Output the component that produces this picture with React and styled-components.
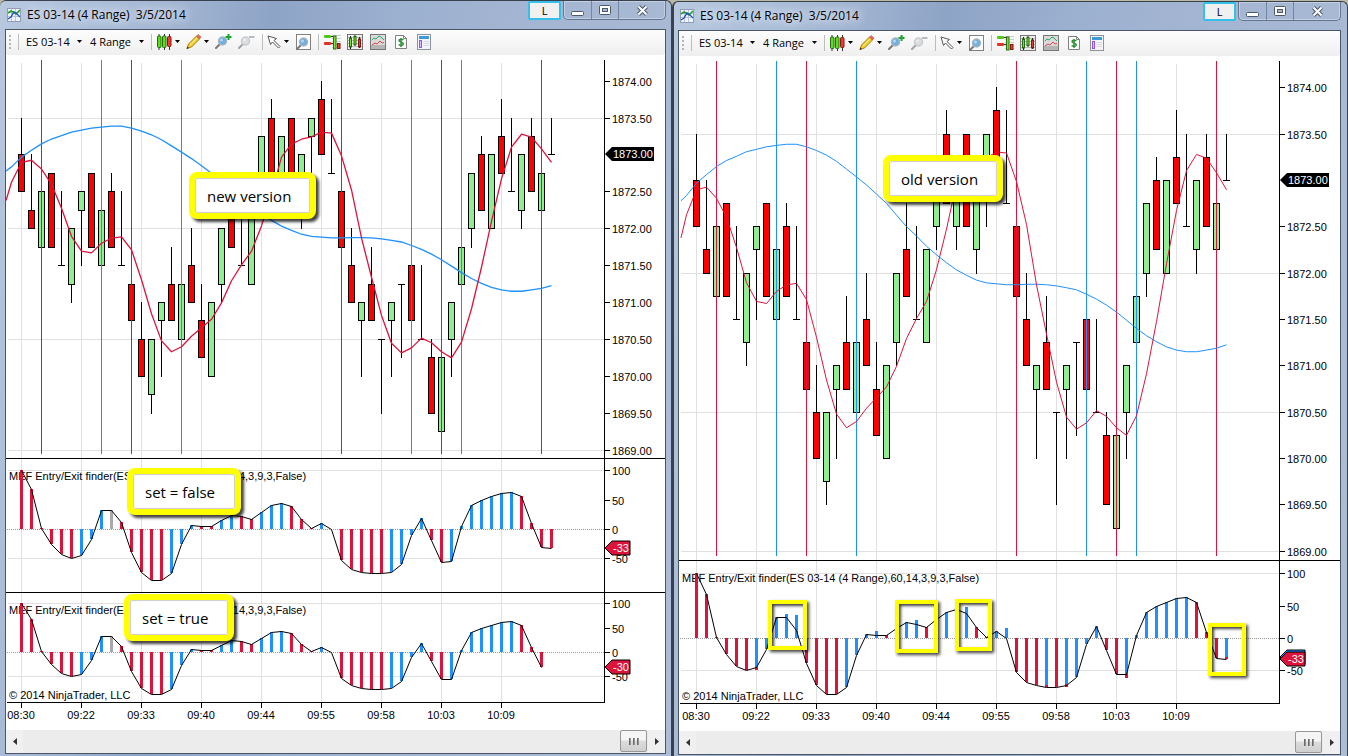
import React from 'react';
import styled, { createGlobalStyle } from 'styled-components';

const GlobalStyle = createGlobalStyle`
  * {
    box-sizing: border-box;
  }
  body {
    margin: 0;
    background: #b9b9a4;
    font-family: 'Open Sans', 'Noto Sans', sans-serif;
    color: #000;
  }
  button,
  select {
    font: inherit;
    color: inherit;
    margin: 0;
    padding: 0;
    border: 0;
    background: none;
  }
`;

const RED = '#dc143c';
const BLUE = '#1e90ff';
const GREY = '#a9a9a9';
const GRID = '#e0e0e0';

// [kind, body top, body bottom, high, low] in quarter points below 1874.00
const CANDLES = [
  ['r', 4, 6, 2, 6],
  ['r', 7, 8, 4, 8],
  ['g', 6, 9, 6, 10],
  ['r', 5, 9, 5, 9],
  ['d', 10, 10, 6, 10],
  ['g', 8, 11, 8, 12],
  ['g', 6, 7, 6, 10],
  ['r', 5, 9, 5, 9],
  ['g', 7, 10, 7, 11],
  ['r', 6, 9, 5, 9],
  ['d', 10, 10, 6, 10],
  ['r', 11, 13, 9, 13],
  ['r', 14, 16, 12, 16],
  ['g', 14, 17, 14, 18],
  ['g', 12, 13, 12, 16],
  ['r', 11, 13, 9, 13],
  ['g', 11, 14, 11, 15],
  ['r', 10, 12, 8, 12],
  ['r', 13, 15, 11, 15],
  ['g', 12, 16, 12, 16],
  ['g', 8, 11, 8, 12],
  ['r', 7, 9, 5, 9],
  ['d', 10, 10, 6, 10],
  ['g', 7, 11, 7, 11],
  ['g', 3, 6, 3, 7],
  ['r', 2, 5, 1, 5],
  ['g', 3, 6, 3, 7],
  ['r', 2, 6, 2, 6],
  ['g', 4, 7, 4, 8],
  ['g', 2, 3, 2, 6],
  ['r', 1, 4, 0, 4],
  ['d', 5, 5, 1, 5],
  ['r', 6, 9, 5, 9],
  ['r', 10, 12, 8, 12],
  ['g', 12, 13, 12, 16],
  ['r', 11, 13, 9, 13],
  ['d', 14, 14, 14, 18],
  ['g', 12, 13, 12, 16],
  ['d', 11, 11, 11, 15],
  ['r', 10, 13, 9, 13],
  ['d', 14, 14, 10, 14],
  ['r', 15, 18, 14, 18],
  ['g', 15, 19, 15, 19],
  ['g', 12, 14, 12, 16],
  ['g', 9, 11, 9, 13],
  ['g', 5, 8, 5, 9],
  ['r', 4, 7, 3, 7],
  ['g', 4, 8, 4, 8],
  ['r', 3, 5, 1, 5],
  ['d', 6, 6, 2, 6],
  ['g', 4, 7, 4, 8],
  ['r', 3, 6, 2, 6],
  ['g', 5, 7, 5, 9],
  ['d', 4, 4, 2, 4],
];

// averages start one bar before the first candle
const SLOW = [
  4.65, 4.12, 3.75, 3.4, 3.14, 2.96, 2.76, 2.66, 2.55, 2.49, 2.44, 2.44, 2.55,
  2.71, 2.91, 3.18, 3.51, 3.85, 4.2, 4.59, 4.99, 5.5, 5.99, 6.4, 6.84, 7.21,
  7.55, 7.86, 8.09, 8.3, 8.42, 8.46, 8.5, 8.5, 8.48, 8.48, 8.5, 8.55, 8.63,
  8.72, 8.91, 9.12, 9.38, 9.68, 10.03, 10.38, 10.7, 10.96, 11.18, 11.32, 11.39,
  11.39, 11.32, 11.24, 11.09,
];

const FAST = [
  5.48, 4.4, 4.29, 4.77, 5.59, 6.89, 8.41, 9.22, 9.31, 8.79, 8.51, 8.44, 9.14,
  10.77, 12.61, 14.08, 14.67, 14.4, 13.83, 13.37, 12.91, 12.02, 10.82, 9.96,
  9.22, 7.85, 6.1, 4.12, 3.42, 3.15, 3.02, 2.77, 2.82, 4.05, 5.9, 8.5, 10.63,
  12.7, 14.21, 14.73, 14.46, 13.93, 14.18, 14.67, 15, 14.15, 12.34, 10.09, 7.6,
  5.3, 3.58, 2.88, 3.04, 3.67, 4.4,
];

const OSC = [
  100, 68, 2, -25, -43, -49, -45, -17, 32, 32, 12, -39, -73, -87, -87, -75, -26,
  6, 5, 5, 15, 24, 22, 17, 29, 40, 44, 39, 17, 2, 11, 0, -53, -68, -73, -75,
  -75, -73, -60, -10, 19, -18, -56, -55, 5, 40, 49, 56, 62, 63, 56, 10, -31, -33,
];

const OSC_COLORS = 'rrrrrrbbbxrrrrrbbbrrbbrrbbbrrrbbrrrrrbbbbrrbbbbbbbrrrr';
const OSC_COLORS_OLD = 'rrrrrrbbbbbrrrrbbbbrbbbrbbbbrrbbrrrbrbbbbrrbbbbbbbrrrb';

// bars of the older indicator that do not end on the line
const OLD_BARS = {
  6: -45,
  9: 37,
  10: 36,
  18: 11,
  22: 28,
  27: 47,
  31: 16,
  35: -73,
  37: -71,
  53: -29,
};
const OLD_TIPS = { 6: -49, 35: -75, 37: -75, 43: -61, 53: -33 };

const SIGNALS = [
  [2, RED],
  [8, BLUE],
  [11, RED],
  [16, BLUE],
  [32, RED],
  [39, BLUE],
  [42, RED],
  [44, BLUE],
  [52, RED],
];

const TIMES = [
  '08:30',
  '09:22',
  '09:33',
  '09:40',
  '09:44',
  '09:55',
  '09:58',
  '10:03',
  '10:09',
];

const INDICATOR = 'MEF Entry/Exit finder(ES 03-14 (4 Range),60,14,3,9,3,False)';

const AXIS_BOTTOM = 647;

const NEW_CHART = {
  first: 15,
  axis: 598,
  price: { top: 25.6, scale: 18.45, bottom: 403 },
  stroke: 1.3,
  panes: [
    { top: 403, zero: 474, scale: 0.588, count: 54, last: -33 },
    { top: 537, zero: 597, scale: 0.488, count: 53, last: -30 },
  ],
};

const OLD_CHART = {
  first: 17,
  axis: 600,
  price: { top: 31.2, scale: 23.18, bottom: 504 },
  stroke: 1,
  panes: [
    { top: 504, zero: 582, scale: 0.649, count: 54, last: -33, old: true },
  ],
};

const Desktop = styled.main`
  display: grid;
  grid-template-columns: minmax(0, 672fr) minmax(0, 676fr);
  min-height: 100vh;
`;

const Frame = styled.section`
  display: flex;
  flex-direction: column;
  margin-top: ${props => (props.$back ? 1 : 0)}px;
  padding: ${props => (props.$back ? '0 6px 1px 4px' : '0 5px 2px')};
  border: solid #39414f;
  border-width: ${props => (props.$back ? '1px 1px 0 2px' : '1px 1px 0 0')};
  border-radius: 6px 6px 0 0;
  background: linear-gradient(
      100deg,
      #b7c8df 0,
      #a4b7d4 160px,
      #8ea4c6 270px,
      #9cb0d0 400px,
      #a3b5d2 520px,
      #adbdd6 100%
    );
`;

const TitleBar = styled.header`
  display: flex;
  align-items: flex-start;
  height: 28px;
  padding-left: 2px;
`;

const Title = styled.h1`
  display: flex;
  align-items: center;
  gap: 6px;
  flex: 1;
  min-width: 0;
  margin: 0;
  height: 27px;
  font-size: 12px;
  font-weight: 400;
  white-space: pre;
  text-shadow: 0 0 6px #dbe5f2, 0 0 10px #dbe5f2, 0 0 14px #dbe5f2;
`;

const LinkButton = styled.button`
  width: 33px;
  height: 19px;
  margin-right: 2px;
  border: 2px solid #35c0ea;
  border-radius: 2px;
  background: #f0f0f0;
  font-size: 11px;
  line-height: 14px;
`;

const Controls = styled.div`
  display: flex;
  height: 19px;
  border: 1px solid #66768f;
  border-top: 0;
  border-radius: 0 0 5px 5px;
  box-shadow: inset 0 0 0 1px #c3d0e3;
`;

const ControlButton = styled.button`
  display: flex;
  align-items: center;
  justify-content: center;
  width: ${props => (props.$wide ? 47 : 27)}px;
  border-left: ${props => (props.$first ? 0 : 1)}px solid #76869f;
`;

const Client = styled.div`
  display: flex;
  flex-direction: column;
  flex: 1;
  border: 1px solid #4a5567;
  background: #fff;
`;

const Toolbar = styled.div`
  display: flex;
  align-items: center;
  height: 25px;
  padding: 0 0 2px 3px;
  border-radius: 0 0 3px 0;
  background: linear-gradient(#fdfdfd, #efefef);
`;

const Grip = styled.span`
  width: 2px;
  height: 14px;
  background: repeating-linear-gradient(#b4b4b4 0 2px, transparent 2px 4px);
`;

const Separator = styled.span`
  width: 1px;
  height: 16px;
  margin: 0 ${props => props.$after || 5}px 0 ${props => props.$before || 7}px;
  background: #bdbdbd;
`;

const Picker = styled.label`
  display: grid;
  align-items: center;
  margin-right: 8px;
  select {
    grid-area: 1 / 1;
    width: ${props => props.$width}px;
    font-size: 11px;
    line-height: 16px;
    appearance: none;
    outline: none;
  }
  svg {
    grid-area: 1 / 1;
    justify-self: end;
    pointer-events: none;
  }
`;

const Tool = styled.button`
  display: flex;
  align-items: center;
  gap: 3px;
  height: 20px;
  margin-right: ${props => props.$after}px;
`;

const ChartArea = styled.div`
  position: relative;
  flex: 1;
  overflow: hidden;
  svg {
    display: block;
  }
`;

const ChartText = styled.text`
  font-family: 'Liberation Sans', Arial, sans-serif;
  font-size: 11px;
  fill: ${props => props.$color || '#000'};
  text-anchor: ${props => props.$anchor || 'start'};
`;

const Callout = styled.div`
  position: absolute;
  left: ${props => props.$x}px;
  top: ${props => props.$y}px;
  width: ${props => props.$width}px;
  height: 47px;
  padding-left: 12px;
  border: 6px solid #ff0;
  border-radius: 8px;
  background: #fff;
  box-shadow: 3px 3px 3px rgba(0, 0, 0, 0.75),
    inset 0 0 1px 1px rgba(0, 0, 0, 0.2);
  font-size: 15px;
  line-height: 37px;
  white-space: pre;
`;

const Highlight = styled.div`
  position: absolute;
  left: ${props => props.$x}px;
  top: ${props => props.$y}px;
  width: ${props => props.$width}px;
  height: ${props => props.$height}px;
  border: 4px solid #ff0;
  box-shadow: 2px 2px 3px rgba(0, 0, 0, 0.75),
    inset 2px 2px 3px rgba(0, 0, 0, 0.75);
`;

const ScrollBar = styled.div`
  display: flex;
  align-items: stretch;
  justify-content: space-between;
  height: 23px;
  background: #ececec;
`;

const ScrollArrow = styled.button`
  display: flex;
  align-items: center;
  justify-content: center;
  width: 17px;
  background: #f0f0f0;
`;

const ScrollEnd = styled.div`
  display: flex;
`;

const Thumb = styled.button`
  display: flex;
  align-items: center;
  justify-content: center;
  gap: 2px;
  width: 27px;
  height: 22px;
  margin-right: 1px;
  border: 1px solid #979797;
  border-radius: 2px;
  background: linear-gradient(#f5f5f5 0 45%, #dcdcdc 50%, #cfcfcf);
  span {
    width: 2px;
    height: 7px;
    background: linear-gradient(90deg, #555, #aaa);
  }
`;

const Caret = () => (
  <svg width="5" height="3" viewBox="0 0 5 3">
    <path d="M0 0h5L2.5 3z" fill="#000" />
  </svg>
);

const AppIcon = () => (
  <svg width="14" height="14" viewBox="0 0 14 14">
    <rect x=".5" y=".5" width="13" height="13" fill="#eef3fb" stroke="#8f9db8" />
    <path d="M4.5 1v12M8.5 1v12M1 4.5h12M1 8.5h12" stroke="#b8c4dc" />
    <path d="M1 5l3-2 2 1 3 2 4-4" fill="none" stroke="#22a022" strokeWidth="1.6" />
    <path d="M1 11l3-2 3-5 2 1 4 4" fill="none" stroke="#2456b8" strokeWidth="1.4" />
  </svg>
);

const BarsIcon = () => (
  <svg width="15" height="16" viewBox="0 0 15 16">
    <path d="M2 0v16M7.500 0v16M12.500 0v16" stroke="#333" />
    <rect x=".5" y="2" width="3.500" height="11.500" rx="1" fill="#5ddb1e" stroke="#256b10" />
    <rect x="5.500" y="2" width="3.500" height="11.500" rx="1" fill="#5ddb1e" stroke="#256b10" />
    <rect x="10.500" y="2.500" width="3.500" height="10" rx="1" fill="#ee3a30" stroke="#801a14" />
  </svg>
);

const PencilIcon = () => (
  <svg width="15" height="16" viewBox="0 0 15 16">
    <path d="M1 14.500l1.500-4.500 8-8 3 3-8 8z" fill="#f7cf2b" stroke="#a57b12" />
    <path d="M10.500 2l1.500-1.500 3 2.500-1.500 2z" fill="#ee6a5c" stroke="#b6493f" strokeWidth=".6" />
    <path d="M4 11l7-7" stroke="#fff1a0" />
    <path d="M.6 15l.8-2.500 1.600 1.600z" fill="#333" />
  </svg>
);

const Lens = ({ color }) => (
  <>
    <path d="M1 15l4-4" stroke="#777" strokeWidth="2" strokeLinecap="round" />
    <circle cx="7.500" cy="8" r="4" fill={color} stroke="#a9b4c0" strokeWidth="1.400" />
    <circle cx="6.500" cy="7" r="1.500" fill="#fff" opacity=".5" />
  </>
);

const ZoomInIcon = () => (
  <svg width="17" height="17" viewBox="0 0 17 17">
    <Lens color="#6fb0e0" />
    <path d="M13.500 1v6M10.500 4h6" stroke="#18a82c" strokeWidth="2" />
  </svg>
);

const ZoomOutIcon = () => (
  <svg width="17" height="17" viewBox="0 0 17 17">
    <g opacity=".65">
      <Lens color="#cfcfcf" />
    </g>
    <path d="M11 4h5.500" stroke="#bbb" strokeWidth="2" />
  </svg>
);

const CursorIcon = () => (
  <svg width="14" height="14" viewBox="0 0 14 14">
    <path
      d="M1 1l8.500 2.500-2.500 2 6 6-1.500 1.500-6-6-2 2.500z"
      fill="#fff"
      stroke="#555"
    />
  </svg>
);

const ZoomBoxIcon = () => (
  <svg width="15" height="16" viewBox="0 0 15 16">
    <rect x=".5" y=".5" width="14" height="15" fill="#fdfdfd" stroke="#808080" />
    <Lens color="#6fb0e0" />
  </svg>
);

const OrdersIcon = () => (
  <svg width="17" height="16" viewBox="0 0 17 16">
    <path d="M8 1.500h9M8 4.500h9M8 7.500h9M8 10.500h9M8 13.500h9" stroke="#ccc" />
    <rect x="0" y="1" width="7" height="3" rx="1" fill="#4fc81c" />
    <rect x="0" y="8" width="7" height="3" rx="1" fill="#e33125" />
    <path d="M7 2.500h3M7 9.500h3" stroke="#333" />
    <rect x="9.500" y="2" width="2.500" height="13" fill="#7be02f" stroke="#2d7212" />
    <rect x="13.500" y="9.500" width="2.500" height="5" fill="#ee3a30" stroke="#801a14" />
  </svg>
);

const CandlesIcon = () => (
  <svg width="16" height="16" viewBox="0 0 16 16">
    <rect x=".5" y=".5" width="15" height="15" fill="#eee" stroke="#777" />
    <path d="M1 3.500h14M1 6.500h14M1 9.500h14M1 12.500h14" stroke="#bbb" />
    <path d="M3.500 2v13M8 1v11M12.500 3v11" stroke="#222" />
    <rect x="2.500" y="4" width="2" height="9" fill="#6fe32a" stroke="#256b10" />
    <rect x="7" y="2.500" width="2" height="8" fill="#6fe32a" stroke="#256b10" />
    <rect x="11.500" y="5" width="2" height="8" fill="#ee3a30" stroke="#801a14" />
  </svg>
);

const LinesIcon = () => (
  <svg width="16" height="16" viewBox="0 0 16 16">
    <rect x=".5" y=".5" width="15" height="15" fill="#dadada" stroke="#777" />
    <rect x="1" y="11" width="14" height="4" fill="#b5b5b5" />
    <path d="M2 6l2-2 2 1 3-3 2 1 3 3" fill="none" stroke="#2ba86a" />
    <path d="M2 11l3-2 2 1 3-3 2 2 2-.5" fill="none" stroke="#e0474a" />
  </svg>
);

const DollarIcon = () => (
  <svg width="12" height="14" viewBox="0 0 12 14">
    <path d="M.5.5h8l3 3v10H.5z" fill="#fff" stroke="#808080" />
    <path d="M8.500.5v3h3" fill="none" stroke="#808080" />
    <path
      d="M8.300 5C7.500 4 4 3.800 4 5.600S8.300 7 8.300 8.900 4.600 10.700 3.600 9.500M6 3v9"
      fill="none"
      stroke="#2c9232"
      strokeWidth="1.500"
    />
  </svg>
);

const PropertiesIcon = () => (
  <svg width="14" height="16" viewBox="0 0 14 16">
    <rect x=".5" y=".5" width="13" height="15" fill="#f3f5fa" stroke="#8d939d" />
    <rect x="2" y="2" width="10" height="3" fill="#3f9bd8" />
    <rect x="2.500" y="6.500" width="2" height="7" fill="#d7c0ff" stroke="#9156ee" />
    <path d="M6.500 7.500H12M6.500 9.500H12M6.500 11.500H12" stroke="#d5dae3" />
  </svg>
);

const Tag = ({ x, y, width, fill, stroke, children }) => (
  <g>
    <path
      d={`M${x} ${y}l7-7h${width}v14h-${width}z`}
      fill={fill}
      stroke={stroke}
    />
    {children && (
      <ChartText x={x + 8} y={y + 4} $color="#fff">
        {children}
      </ChartText>
    )}
  </g>
);

const PriceScale = ({ chart }) => {
  const { price, axis } = chart;
  const labels = Array.from({ length: 11 }, (_, i) => i * 2).filter(
    t => t !== 4,
  );
  return (
    <g>
      {labels.map(t => {
        const y = Math.round(price.top + t * price.scale);
        return (
          <g key={t}>
            <rect x={axis} y={y} width="6" height="1" />
            <ChartText x={axis + 8} y={y + 5}>
              {(1874 - t / 4).toFixed(2)}
            </ChartText>
          </g>
        );
      })}
      <Tag
        x={axis + 1}
        y={Math.round(price.top + 4 * price.scale)}
        width={42}
        fill="#000">
        1873.00
      </Tag>
    </g>
  );
};

const PricePane = ({ chart }) => {
  const { first, axis, price, stroke } = chart;
  const toY = t => Math.round(price.top + t * price.scale);
  const toPoints = values =>
    values
      .map(
        (t, i) =>
          `${first + 0.5 + (i - 1) * 10},${price.top + 0.5 + t * price.scale}`,
      )
      .join(' ');

  return (
    <g>
      {[2, 8, 14, 20].map(t => (
        <rect key={t} x="2" y={toY(t)} width={axis - 2} height="1" fill={GRID} />
      ))}
      <g shapeRendering="crispEdges">
        {CANDLES.map(([kind, top, bottom, high, low], i) => {
          const x = first + i * 10;
          return (
            <g key={i}>
              <rect x={x} y={toY(high)} width="1" height={toY(low) - toY(high) + 1} />
              {kind === 'd' ? (
                <rect x={x - 3} y={toY(top)} width="7" height="1" />
              ) : (
                <rect
                  x={x - 2.5}
                  y={toY(top) + 0.5}
                  width="6"
                  height={toY(bottom) - toY(top)}
                  fill={kind === 'g' ? '#90ee90' : '#f00'}
                  stroke="#000"
                />
              )}
            </g>
          );
        })}
        {SIGNALS.map(([i, color]) => (
          <rect
            key={i}
            x={first + i * 10}
            y="5"
            width="1"
            height={price.bottom - 9}
            fill={color}
          />
        ))}
      </g>
      <g fill="none" strokeWidth={stroke} strokeLinejoin="round">
        <polyline
          points={`${first - 15},${price.top + 4.9 * price.scale} ${toPoints(SLOW)}`}
          stroke={BLUE}
        />
        <polyline
          points={`${first - 15},${price.top + 6.5 * price.scale} ${toPoints(FAST)}`}
          stroke={RED}
        />
      </g>
    </g>
  );
};

const OscillatorPane = ({ chart, pane }) => {
  const { first, axis } = chart;
  const toY = v => Math.round(pane.zero - v * pane.scale);
  const colors = pane.old ? OSC_COLORS_OLD : OSC_COLORS;
  const fills = { r: RED, b: BLUE, x: GREY };
  const values = OSC.slice(0, pane.count);
  const tagY = toY(pane.last);

  const bar = (i, from, to, fill) => (
    <rect
      key={`${i}-${to}`}
      x={first - 1 + i * 10}
      y={Math.min(toY(from), toY(to))}
      width="3"
      height={Math.abs(toY(to) - toY(from))}
      fill={fill}
    />
  );

  return (
    <g>
      {[100, -50].map(v => (
        <rect key={v} x="2" y={toY(v)} width={axis - 2} height="1" fill={GRID} />
      ))}
      <path
        d={`M1 ${pane.zero + 0.5}H${axis}`}
        stroke="#999"
        strokeDasharray="1 1"
        shapeRendering="crispEdges"
      />
      <ChartText x="3" y={pane.top + 22}>
        {INDICATOR}
      </ChartText>
      {values.map((v, i) => {
        const end = pane.old && i in OLD_BARS ? OLD_BARS[i] : v;
        return bar(i, 0, end, fills[colors[i]]);
      })}
      {pane.old &&
        Object.keys(OLD_TIPS).map(i =>
          bar(Number(i), OLD_BARS[i] || OSC[i], OLD_TIPS[i], RED),
        )}
      <polyline
        points={values
          .map((v, i) => `${first + 0.5 + i * 10},${toY(v) + 0.5}`)
          .join(' ')}
        fill="none"
        stroke="#000"
      />
      <rect x="0" y={pane.top} width="100%" height="1" />
      {[100, 50, 0, -50].map(v => (
        <g key={v}>
          <rect x={axis} y={toY(v)} width="6" height="1" />
          <ChartText x={axis + 8} y={toY(v) + 5}>
            {v}
          </ChartText>
        </g>
      ))}
      {pane.old && (
        <Tag x={axis + 1} y={tagY - 2} width={18} fill={BLUE} stroke="#000" />
      )}
      <Tag x={axis + 1} y={tagY} width={18} fill={RED} stroke="#000">
        {pane.last}
      </Tag>
    </g>
  );
};

const Chart = ({ chart }) => (
  <svg width="100%" height="675">
    {TIMES.map((time, i) => (
      <rect
        key={time}
        x={chart.first + i * 60}
        y="8"
        width="1"
        height={AXIS_BOTTOM - 8}
        fill={GRID}
      />
    ))}
    <PricePane chart={chart} />
    <PriceScale chart={chart} />
    {chart.panes.map(pane => (
      <OscillatorPane key={pane.top} chart={chart} pane={pane} />
    ))}
    <rect x={chart.axis} y="5" width="1" height={AXIS_BOTTOM - 4} />
    <rect x="1" y={AXIS_BOTTOM} width={chart.axis} height="1" />
    {TIMES.map((time, i) => (
      <g key={time}>
        <rect x={chart.first + i * 60} y={AXIS_BOTTOM} width="1" height="6" />
        <ChartText
          x={chart.first + i * 60}
          y={AXIS_BOTTOM + 17}
          $anchor="middle">
          {time}
        </ChartText>
      </g>
    ))}
    <ChartText x="3" y={AXIS_BOTTOM - 3}>
      © 2014 NinjaTrader, LLC
    </ChartText>
  </svg>
);

const ChartToolbar = () => (
  <Toolbar role="toolbar" aria-label="Chart">
    <Grip />
    <Separator $after={7} />
    <Picker $width={56}>
      <select aria-label="Instrument">
        <option>ES 03-14</option>
      </select>
      <Caret />
    </Picker>
    <Picker $width={54}>
      <select aria-label="Interval">
        <option>4 Range</option>
      </select>
      <Caret />
    </Picker>
    <Separator $before={-1} />
    <Tool $after={6} aria-label="Chart style">
      <BarsIcon />
      <Caret />
    </Tool>
    <Tool $after={6} aria-label="Drawing tools">
      <PencilIcon />
      <Caret />
    </Tool>
    <Tool $after={6} aria-label="Zoom in">
      <ZoomInIcon />
    </Tool>
    <Tool $after={0} aria-label="Zoom out">
      <ZoomOutIcon />
    </Tool>
    <Separator $after={4} />
    <Tool $after={7} aria-label="Cursor">
      <CursorIcon />
      <Caret />
    </Tool>
    <Tool $after={0} aria-label="Zoom frame">
      <ZoomBoxIcon />
    </Tool>
    <Separator />
    <Tool $after={6} aria-label="Chart trader">
      <OrdersIcon />
    </Tool>
    <Tool $after={7} aria-label="Data series">
      <CandlesIcon />
    </Tool>
    <Tool $after={9} aria-label="Indicators">
      <LinesIcon />
    </Tool>
    <Tool $after={10} aria-label="Strategies">
      <DollarIcon />
    </Tool>
    <Tool $after={0} aria-label="Properties">
      <PropertiesIcon />
    </Tool>
  </Toolbar>
);

const WindowControls = () => (
  <Controls>
    <ControlButton $first aria-label="Minimize">
      <svg width="13" height="11" viewBox="0 0 13 11">
        <rect x=".5" y="6.500" width="12" height="4" rx="1" fill="#fff" stroke="#4d586b" />
      </svg>
    </ControlButton>
    <ControlButton aria-label="Maximize">
      <svg width="12" height="11" viewBox="0 0 12 11">
        <rect x=".5" y=".5" width="11" height="9" rx="1" fill="#fff" stroke="#4d586b" />
        <rect x="3.500" y="3.500" width="5" height="3" fill="#a9b9d1" stroke="#4d586b" />
      </svg>
    </ControlButton>
    <ControlButton $wide aria-label="Close">
      <svg width="13" height="11" viewBox="0 0 13 11">
        <path d="M2.500 1.500l8 8M10.500 1.500l-8 8" stroke="#4d586b" strokeWidth="4" />
        <path d="M2.500 1.500l8 8M10.500 1.500l-8 8" stroke="#fff" strokeWidth="2" />
      </svg>
    </ControlButton>
  </Controls>
);

const ChartWindow = ({ chart, back, children }) => (
  <Frame $back={back}>
    <TitleBar>
      <Title>
        <AppIcon />
        {'ES 03-14 (4 Range)  3/5/2014'}
      </Title>
      <LinkButton>L</LinkButton>
      <WindowControls />
    </TitleBar>
    <Client>
      <ChartToolbar />
      <ChartArea>
        <Chart chart={chart} />
        {children}
      </ChartArea>
      <ScrollBar>
        <ScrollArrow aria-label="Scroll left">
          <svg width="4" height="7" viewBox="0 0 4 7">
            <path d="M4 0v7L0 3.500z" fill="#333" />
          </svg>
        </ScrollArrow>
        <ScrollEnd>
          <Thumb aria-label="Scroll position">
            <span />
            <span />
            <span />
          </Thumb>
          <ScrollArrow aria-label="Scroll right">
            <svg width="4" height="7" viewBox="0 0 4 7">
              <path d="M0 0v7l4-3.500z" fill="#333" />
            </svg>
          </ScrollArrow>
        </ScrollEnd>
      </ScrollBar>
    </Client>
  </Frame>
);

const App = () => (
  <>
    <GlobalStyle />
    <Desktop>
      <ChartWindow chart={NEW_CHART}>
        <Callout $x={183} $y={117} $width={127}>
          new version
        </Callout>
        <Callout $x={121} $y={413} $width={114}>
          set = false
        </Callout>
        <Callout $x={118} $y={539} $width={110}>
          set = true
        </Callout>
      </ChartWindow>
      <ChartWindow chart={OLD_CHART} back>
        <Callout $x={204} $y={99} $width={120}>
          old version
        </Callout>
        <Highlight $x={89} $y={544} $width={39} $height={50} />
        <Highlight $x={216} $y={544} $width={43} $height={53} />
        <Highlight $x={276} $y={543} $width={37} $height={52} />
        <Highlight $x={529} $y={567} $width={38} $height={53} />
      </ChartWindow>
    </Desktop>
  </>
);

export default App;
